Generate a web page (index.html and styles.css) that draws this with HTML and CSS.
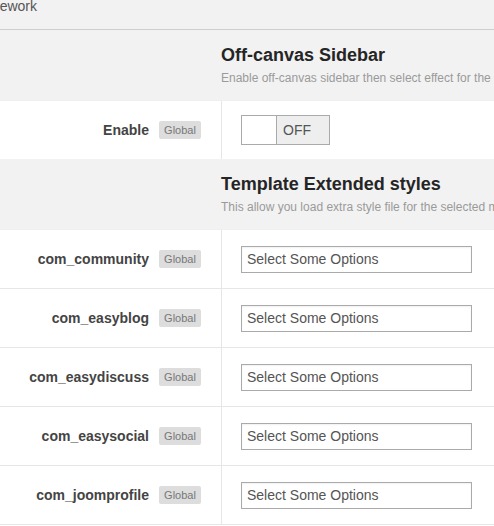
FILE: index.html
```html
<!DOCTYPE html>
<html>
<head>
<meta charset="utf-8">
<link rel="stylesheet" href="styles.css">
</head>
<body>
<div class="topbar"><span class="crumb">Framework</span></div>

<div class="section-head">
  <h3 class="section-title">Off-canvas Sidebar</h3>
  <p class="section-desc">Enable off-canvas sidebar then select effect for the off-canvas menu</p>
</div>
<div class="fields">
  <div class="row row-last">
    <div class="label-cell"><span class="label">Enable</span><span class="badge">Global</span></div>
    <div class="control-cell">
      <div class="toggle"><span class="toggle-on"></span><span class="toggle-off">OFF</span></div>
    </div>
  </div>
</div>

<div class="section-head">
  <h3 class="section-title">Template Extended styles</h3>
  <p class="section-desc">This allow you load extra style file for the selected modules and components</p>
</div>
<div class="fields">
  <div class="row">
    <div class="label-cell"><span class="label">com_community</span><span class="badge">Global</span></div>
    <div class="control-cell"><div class="select">Select Some Options</div></div>
  </div>
  <div class="row">
    <div class="label-cell"><span class="label">com_easyblog</span><span class="badge">Global</span></div>
    <div class="control-cell"><div class="select">Select Some Options</div></div>
  </div>
  <div class="row">
    <div class="label-cell"><span class="label">com_easydiscuss</span><span class="badge">Global</span></div>
    <div class="control-cell"><div class="select">Select Some Options</div></div>
  </div>
  <div class="row">
    <div class="label-cell"><span class="label">com_easysocial</span><span class="badge">Global</span></div>
    <div class="control-cell"><div class="select">Select Some Options</div></div>
  </div>
  <div class="row">
    <div class="label-cell"><span class="label">com_joomprofile</span><span class="badge">Global</span></div>
    <div class="control-cell"><div class="select">Select Some Options</div></div>
  </div>
</div>
</body>
</html>
```

FILE: styles.css
```css
html, body {
  margin: 0;
  padding: 0;
  background: #ffffff;
  font-family: "Liberation Sans", Arial, sans-serif;
  overflow: hidden;
}

.topbar {
  height: 29px;
  background: #f2f2f2;
  border-bottom: 1px solid #cfcfcf;
  overflow: hidden;
  white-space: nowrap;
}

.crumb {
  display: block;
  margin-left: -33px;
  font-size: 14px;
  line-height: 12px;
  color: #555555;
}

.section-head {
  height: 70px;
  box-sizing: border-box;
  background: #f2f2f2;
  padding: 15px 0 0 221px;
  overflow: hidden;
  white-space: nowrap;
}

.section-title {
  margin: 0;
  font-size: 18px;
  line-height: 20px;
  font-weight: bold;
  color: #252525;
}

.section-desc {
  margin: 4px 0 0;
  font-size: 12px;
  line-height: 18px;
  color: #9a9a9a;
}

.fields {
  border-top: 1px solid #efefef;
}

.row {
  display: flex;
  height: 59px;
  box-sizing: border-box;
  border-bottom: 1px solid #e6e6e6;
}

.row-last {
  height: 58px;
  border-bottom: none;
}

.label-cell {
  width: 222px;
  flex: none;
  box-sizing: border-box;
  border-right: 1px solid #e6e6e6;
  display: flex;
  justify-content: flex-end;
  align-items: center;
  gap: 10px;
  padding-right: 20px;
}

.label {
  font-size: 14px;
  font-weight: bold;
  color: #444444;
}

.badge {
  display: inline-block;
  width: 42px;
  height: 18px;
  line-height: 18px;
  text-align: center;
  font-size: 11px;
  color: #777777;
  background: #dddddd;
  border-radius: 2px;
}

.control-cell {
  flex: 1;
  display: flex;
  align-items: center;
  padding-left: 19px;
}

.toggle {
  display: flex;
  width: 89px;
  height: 30px;
  box-sizing: border-box;
  border: 1px solid #aaaaaa;
}

.toggle-on {
  width: 34px;
  background: #ffffff;
  border-right: 1px solid #aaaaaa;
}

.toggle-off {
  flex: 1;
  background: #eeeeee;
  font-size: 14px;
  line-height: 28px;
  color: #555555;
  padding-left: 6px;
}

.select {
  width: 231px;
  height: 27px;
  box-sizing: border-box;
  border: 1px solid #aaaaaa;
  box-shadow: inset 0 1px 2px rgba(0,0,0,0.06);
  padding-left: 5px;
  font-size: 14px;
  line-height: 24px;
  color: #555555;
  white-space: nowrap;
}
```
